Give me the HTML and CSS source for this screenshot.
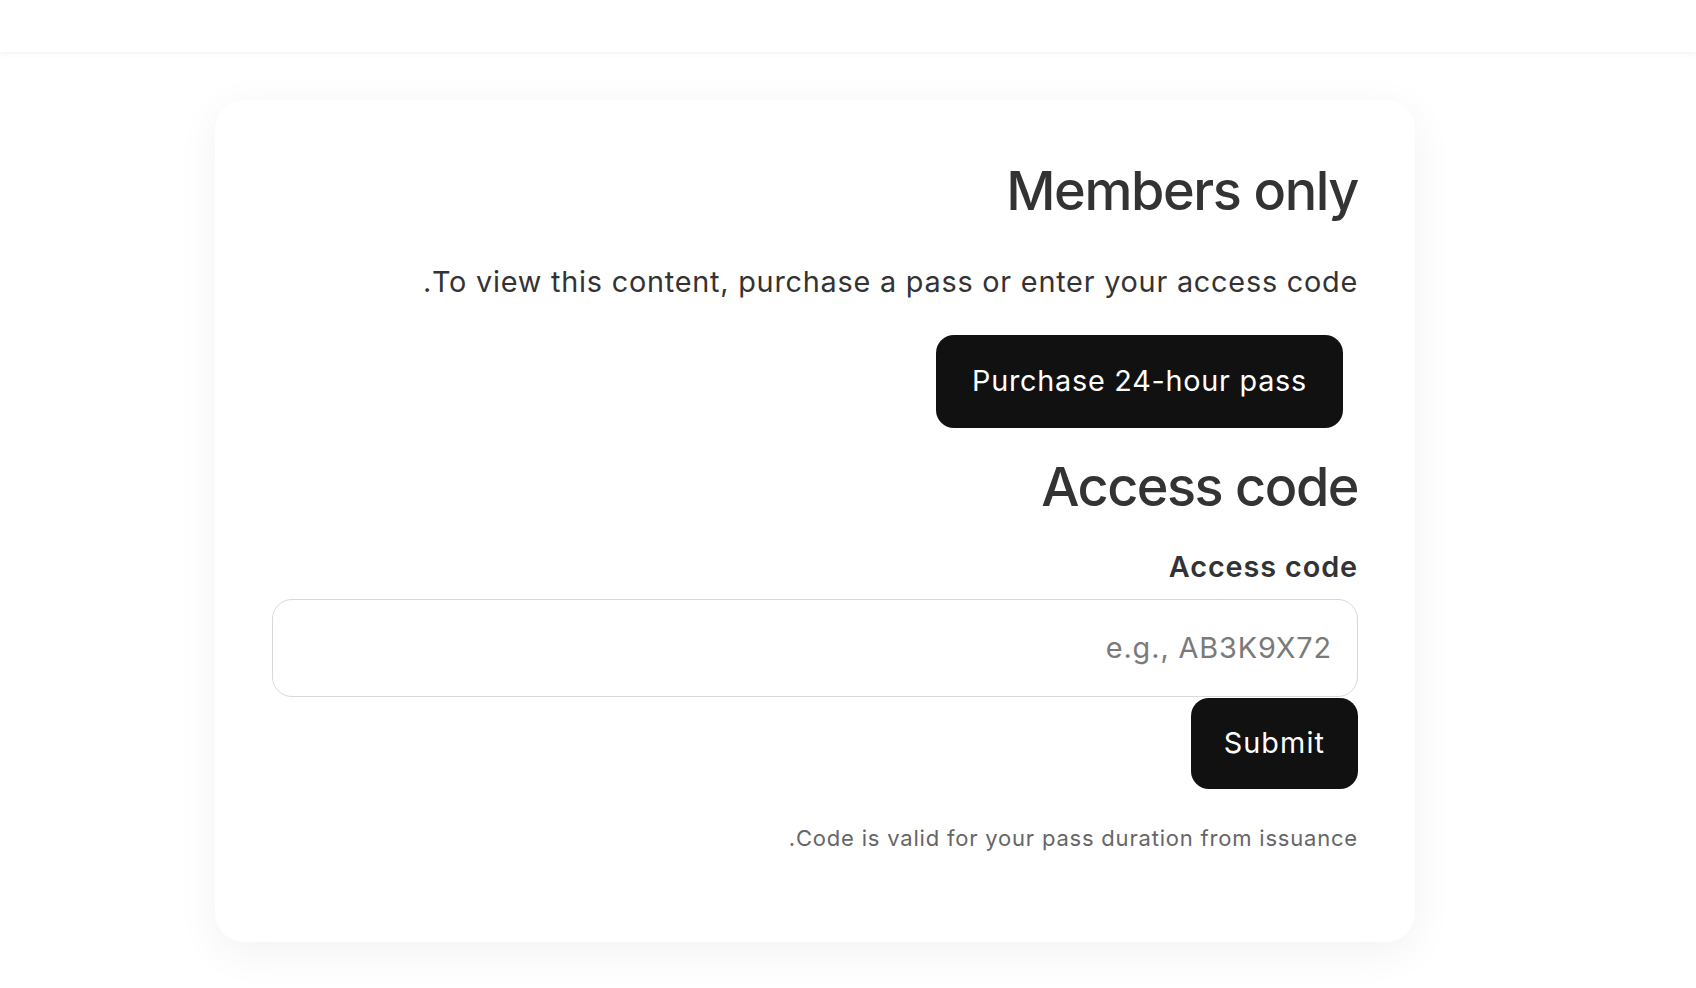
FILE: index.html
```html
<!DOCTYPE html>
<html lang="en">
<head>
<meta charset="utf-8">
<title>Members only</title>
<link rel="stylesheet" href="styles.css">
</head>
<body>
<header class="topbar"></header>
<main class="page">
  <section class="card" dir="rtl">
    <h1 class="title">Members only</h1>
    <p class="lead">To view this content, purchase a pass or enter your access code.</p>
    <button class="btn btn-purchase" type="button">Purchase 24-hour pass</button>
    <h2 class="subtitle">Access code</h2>
    <form class="code-form">
      <label class="field-label" for="code">Access code</label>
      <input class="field-input" id="code" type="text" placeholder="e.g., AB3K9X72">
      <button class="btn btn-submit" type="submit">Submit</button>
    </form>
    <p class="note">Code is valid for your pass duration from issuance.</p>
  </section>
</main>
</body>
</html>
```
FILE: styles.css
```css
* { box-sizing: border-box; }
html, body { margin: 0; padding: 0; }
body {
  background: #ffffff;
  font-family: Inter, "Noto Sans", "Liberation Sans", sans-serif;
  color: #333333;
  min-height: 988px;
}
.topbar {
  height: 52px;
  background: #ffffff;
  box-shadow: 0 1px 6px rgba(0, 0, 0, 0.07);
  position: relative;
  z-index: 1;
}
.page {
  padding: 48px 0 0 215px;
}
.card {
  width: 1200px;
  min-height: 842px;
  background: #ffffff;
  border-radius: 29px;
  padding: 57px 57px 57px;
  box-shadow: 0 10px 44px rgba(0, 0, 0, 0.055);
  display: flex;
  flex-direction: column;
  align-items: flex-start;
  text-align: right;
}
.title {
  margin: 0;
  padding-top: 2px;
  font-size: 54px;
  font-weight: 450;
  letter-spacing: -1.4px;
  line-height: 1.2;
  color: #333333;
}
.lead {
  margin: 36px 0 0;
  font-size: 28.8px;
  letter-spacing: 0.78px;
  line-height: 1.5;
  color: #333333;
}
.btn {
  font-family: inherit;
  border: none;
  background: #111111;
  color: #ffffff;
  font-size: 28.8px;
  letter-spacing: 0.75px;
  line-height: 1.2;
  border-radius: 18px;
  cursor: pointer;
}
.btn-purchase {
  margin: 32.5px 15px 0 0;
  padding: 28.8px 36px;
}
.subtitle {
  margin: 27.5px 0 0;
  font-size: 54px;
  font-weight: 450;
  letter-spacing: -1.5px;
  line-height: 1.2;
  color: #333333;
}
.code-form {
  align-self: stretch;
  display: flex;
  flex-direction: column;
  align-items: flex-start;
  margin-top: 25.5px;
}
.field-label {
  font-size: 28.8px;
  font-weight: 600;
  letter-spacing: 0.9px;
  line-height: 1.5;
  color: #333333;
}
.field-input {
  margin-top: 10px;
  width: 100%;
  height: 98px;
  padding: 0 25px;
  border: 1.5px solid #d8d8d8;
  border-radius: 20px;
  font-family: inherit;
  font-size: 28.8px;
  letter-spacing: 0.9px;
  color: #333333;
  background: #ffffff;
  outline: none;
}
.field-input::placeholder { color: #7a7a7a; }
.btn-submit {
  margin-top: 1.5px;
  padding: 28.2px 33px;
  letter-spacing: 1.1px;
}
.note {
  margin: 33px 0 0;
  font-size: 22px;
  letter-spacing: 0.8px;
  line-height: 1.5;
  color: #666666;
}
```
